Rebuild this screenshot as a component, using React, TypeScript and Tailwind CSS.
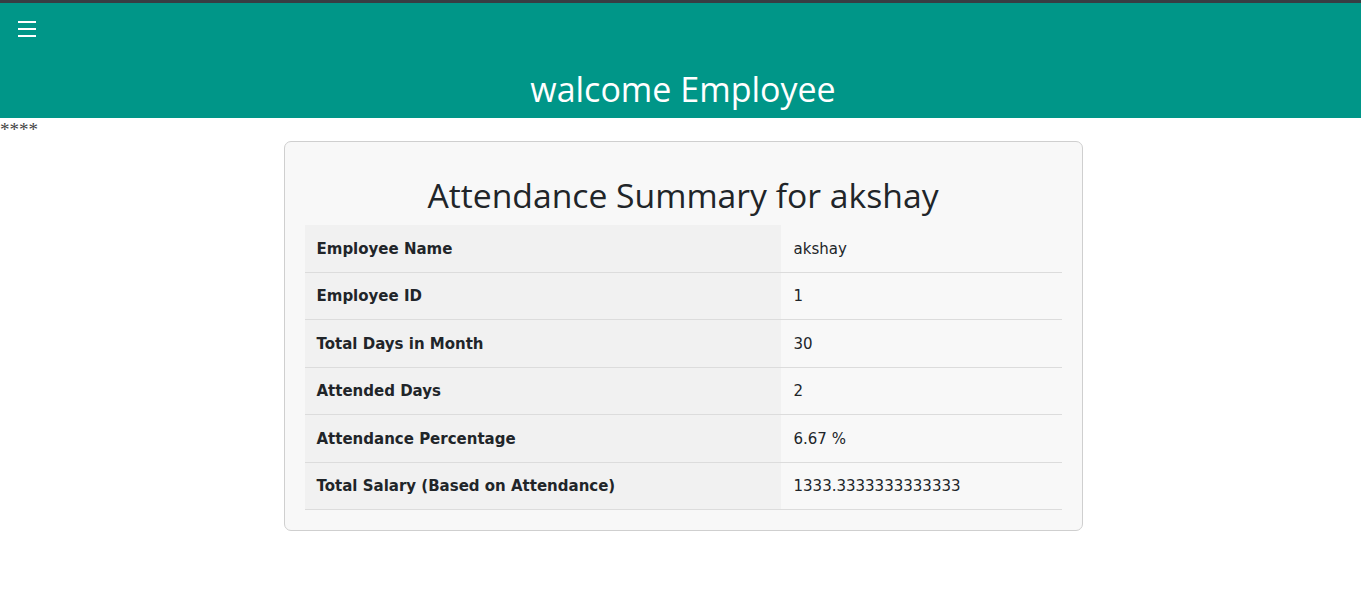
import React from 'react';

const rows: [string, string][] = [
  ['Employee Name', 'akshay'],
  ['Employee ID', '1'],
  ['Total Days in Month', '30'],
  ['Attended Days', '2'],
  ['Attendance Percentage', '6.67 %'],
  ['Total Salary (Based on Attendance)', '1333.3333333333333'],
];

export default function App() {
  return (
    <div className="min-h-[589px] bg-white">
      {/* Top bar */}
      <header className="border-t-[3px] border-[#373d43] bg-[#009688] h-[118px] flex flex-col">
        <button className="ml-[18px] mt-[18px] w-[18px] flex flex-col gap-[5px]">
          <span className="block h-[2px] w-[18px] bg-white" />
          <span className="block h-[2px] w-[18px] bg-white" />
          <span className="block h-[2px] w-[18px] bg-white" />
        </button>
        <h1 className="mt-[30px] pl-[5px] text-center text-white text-[34px] leading-[44px] font-['Open_Sans',sans-serif]">
          walcome Employee
        </h1>
      </header>

      <div className="h-[23px] font-['Liberation_Serif',serif] text-[19px] leading-[23px] text-[#444]">****</div>

      {/* Summary card */}
      <div className="flex justify-center pl-[5px]">
        <div className="w-[799px] bg-[#f8f8f8] border border-[#cfcfcf] rounded-[7px] px-[20px] pt-[21px] pb-[20px]">
          <h2 className="mt-[10px] mb-[8px] text-center text-[#212529] text-[33.7px] leading-[44px] font-['Open_Sans',sans-serif]">
            Attendance Summary for akshay
          </h2>
          <div className="font-['DejaVu_Sans',Verdana,sans-serif] text-[15px] text-[#212529]">
            {rows.map(([label, value]) => (
              <div key={label} className="flex h-[47.5px] border-b border-[#dcdcdc]">
                <div className="w-[476px] bg-[#f1f1f1] pl-[12px] pt-[1px] flex items-center font-bold">{label}</div>
                <div className="flex-1 pl-[13px] pt-[1px] flex items-center">{value}</div>
              </div>
            ))}
          </div>
        </div>
      </div>
    </div>
  );
}
